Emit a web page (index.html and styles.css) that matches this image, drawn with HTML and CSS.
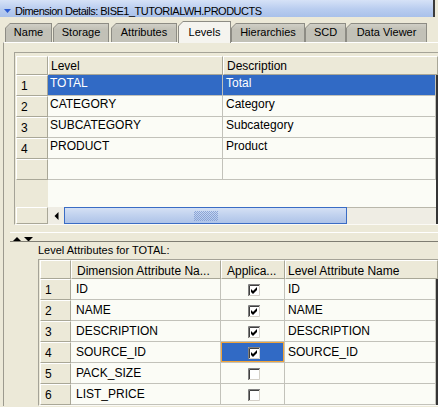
FILE: index.html
```html
<!DOCTYPE html>
<html>
  <head>
    <meta charset="utf-8" />
    <title>Dimension Details</title>
    <link rel="stylesheet" href="styles.css">
  </head>
  <body>
    <svg class="defs" width="0" height="0">
      <symbol id="box-off" viewBox="0 0 12 12">
        <rect x="0" y="0" width="12" height="12" fill="#fff"/>
        <path d="M0.5 12V0.5H12" stroke="#808080" fill="none"/>
        <path d="M1.5 11V1.5H11" stroke="#404040" fill="none"/>
        <path d="M1 11.5H11.5V1" stroke="#d4d0c8" fill="none"/>
      </symbol>
      <symbol id="box-on" viewBox="0 0 12 12">
        <use href="#box-off"/>
        <path d="M3 5L5 7L9 3V6L5 10L3 8Z" fill="#000"/>
      </symbol>
    </svg>

    <div class="titlebar">
      <svg class="collapse" width="7" height="4" viewBox="0 0 7 4"><path d="M0 0H7L3.5 4Z" fill="#2b5bd2"/></svg>
      <span>Dimension Details: BISE1_TUTORIALWH.PRODUCTS</span>
    </div>

    <div class="tabs">
      <div class="tab tab-name"><span>Name</span></div>
      <div class="tab tab-storage"><span>Storage</span></div>
      <div class="tab tab-attributes"><span>Attributes</span></div>
      <div class="tab tab-levels active"><span>Levels</span></div>
      <div class="tab tab-hierarchies"><span>Hierarchies</span></div>
      <div class="tab tab-scd"><span>SCD</span></div>
      <div class="tab tab-viewer"><span>Data Viewer</span></div>
    </div>

    <div class="panel">
      <!-- levels table -->
      <div class="grid grid-levels">
        <div class="grid-head">
          <div class="head-cell rownum-head"></div>
          <div class="head-cell c-level">Level</div>
          <div class="head-cell c-desc">Description</div>
        </div>
        <div class="grid-body">
          <div class="row selected">
            <div class="rownum">1</div>
            <div class="cell c-level">TOTAL</div>
            <div class="cell c-desc">Total</div>
          </div>
          <div class="row">
            <div class="rownum">2</div>
            <div class="cell c-level">CATEGORY</div>
            <div class="cell c-desc">Category</div>
          </div>
          <div class="row">
            <div class="rownum">3</div>
            <div class="cell c-level">SUBCATEGORY</div>
            <div class="cell c-desc">Subcategory</div>
          </div>
          <div class="row">
            <div class="rownum">4</div>
            <div class="cell c-level">PRODUCT</div>
            <div class="cell c-desc">Product</div>
          </div>
          <div class="row">
            <div class="rownum"></div>
            <div class="cell c-level"></div>
            <div class="cell c-desc"></div>
          </div>
          <div class="filler">
            <div class="gutter"></div>
            <div class="blank"></div>
          </div>
          <div class="hscroll">
            <div class="rownum"></div>
            <div class="arrow-btn">
              <svg width="5" height="8" viewBox="0 0 5 8"><path d="M4.5 0V8L0.5 4Z" fill="#000"/></svg>
            </div>
            <div class="thumb"><div class="grip"></div></div>
            <div class="track"></div>
          </div>
        </div>
      </div>

      <div class="splitter">
        <svg width="21" height="4" viewBox="0 0 21 4">
          <path d="M0 4L4 0L8 4Z" fill="#000"/>
          <path d="M11 0H20L15.5 4.5Z" fill="#000"/>
        </svg>
      </div>

      <div class="section-label">Level Attributes for TOTAL:</div>

      <!-- level attributes table -->
      <div class="grid grid-attrs">
        <div class="grid-head">
          <div class="head-cell rownum-head"></div>
          <div class="head-cell c-dim">Dimension Attribute Na...</div>
          <div class="head-cell c-app">Applica...</div>
          <div class="head-cell c-lan">Level Attribute Name</div>
        </div>
        <div class="grid-body">
          <div class="row">
            <div class="rownum">1</div>
            <div class="cell c-dim">ID</div>
            <div class="cell c-app"><svg class="box"><use href="#box-on"/></svg></div>
            <div class="cell c-lan">ID</div>
          </div>
          <div class="row">
            <div class="rownum">2</div>
            <div class="cell c-dim">NAME</div>
            <div class="cell c-app"><svg class="box"><use href="#box-on"/></svg></div>
            <div class="cell c-lan">NAME</div>
          </div>
          <div class="row">
            <div class="rownum">3</div>
            <div class="cell c-dim">DESCRIPTION</div>
            <div class="cell c-app"><svg class="box"><use href="#box-on"/></svg></div>
            <div class="cell c-lan">DESCRIPTION</div>
          </div>
          <div class="row">
            <div class="rownum">4</div>
            <div class="cell c-dim">SOURCE_ID</div>
            <div class="cell c-app focused"><svg class="box"><use href="#box-on"/></svg></div>
            <div class="cell c-lan">SOURCE_ID</div>
          </div>
          <div class="row">
            <div class="rownum">5</div>
            <div class="cell c-dim">PACK_SIZE</div>
            <div class="cell c-app"><svg class="box"><use href="#box-off"/></svg></div>
            <div class="cell c-lan"></div>
          </div>
          <div class="row">
            <div class="rownum">6</div>
            <div class="cell c-dim">LIST_PRICE</div>
            <div class="cell c-app"><svg class="box"><use href="#box-off"/></svg></div>
            <div class="cell c-lan"></div>
          </div>
        </div>
      </div>
    </div>
  </body>
</html>
```

FILE: styles.css
```css
body {
    margin: 0;
    width: 438px;
    height: 407px;
    overflow: hidden;
    background: #ece9d8;
    font-family: "Liberation Sans", Arial, sans-serif;
    color: #000;
}
.defs {
    position: absolute;
}

/* title bar */
.titlebar {
    display: flex;
    align-items: flex-start;
    width: 435px;
    height: 17px;
    box-sizing: border-box;
    padding: 4px 0 0 4px;
    background: linear-gradient(#d6e2f7, #b8ccef 55%, #a9c1ea);
    border-right: 2px solid #3b3b3b;
    font-size: 11px;
    line-height: 14px;
    letter-spacing: -0.5px;
    white-space: nowrap;
}
.collapse {
    flex: none;
    margin: 5px 4px 0 0;
}

/* tabs */
.tabs {
    display: flex;
    align-items: flex-end;
    height: 25px;
    padding-left: 5px;
}
.tab {
    flex: none;
    height: 19px;
    box-sizing: border-box;
    padding: 1px 1px 0 1px;
    background: #8d8c84;
    clip-path: polygon(5px 0, 100% 0, 100% 100%, 0 100%, 0 5px);
    font-size: 11px;
}
.tab span {
    display: block;
    height: 100%;
    box-sizing: border-box;
    background: linear-gradient(#d0cfc6, #c2c1b7 30%);
    clip-path: polygon(4px 0, 100% 0, 100% 100%, 0 100%, 0 4px);
    text-align: center;
    line-height: 16px;
    white-space: nowrap;
}
.tab.active {
    position: relative;
    z-index: 1;
    height: 22px;
    margin-bottom: -1px;
}
.tab.active span {
    padding-top: 2px;
    background: #f5f4ef;
}
.tab-name { width: 47px; }
.tab-storage { width: 56px; margin-left: 1px; }
.tab-attributes { width: 66px; margin-left: 2px; }
.tab-levels { width: 53px; margin-left: 1px; }
.tab-hierarchies { width: 74px; }
.tab-scd { width: 41px; }
.tab-viewer { width: 81px; }

/* tab page */
.panel {
    margin-left: 3px;
    border-left: 1px solid #9c9a8e;
    border-top: 1px solid #fff;
    padding-top: 9px;
}

/* tables */
.grid {
    border: 1px solid;
    border-color: #a5a397 transparent #fbfaf5 #a5a397;
    border-right: 0;
    padding-left: 1px;
}
.grid-levels {
    margin-left: 10px;
    padding-top: 3px;
}
.grid-attrs {
    margin: 1px 0 0 34px;
}
.grid-head,
.row,
.filler,
.hscroll {
    display: flex;
}
.grid-body {
    border-right: 2px solid #353535;
}
.head-cell,
.rownum {
    flex: none;
    box-sizing: border-box;
    border: 1px solid;
    border-color: #fff #a9a797 #a9a797 #fff;
    background: #ece9d8;
    font-size: 12px;
    line-height: 16px;
    white-space: nowrap;
    overflow: hidden;
}
.head-cell {
    height: 19px;
    padding: 1px 0 0 3px;
}
.grid-attrs .head-cell {
    padding-top: 2px;
}
.rownum-head,
.rownum {
    width: 32px;
}
.grid-attrs .rownum-head,
.grid-attrs .rownum {
    width: 31px;
}
.rownum {
    height: 21px;
    padding: 2px 0 0 4px;
}
.row {
    height: 21px;
}
.cell {
    flex: none;
    box-sizing: border-box;
    height: 21px;
    border-right: 1px solid #c2c2ba;
    border-bottom: 1px solid #c2c2ba;
    background: #fbfcf6;
    font-size: 12px;
    line-height: 16px;
    white-space: nowrap;
    overflow: hidden;
}
.row.selected .cell {
    background: #316ac5;
    color: #fff;
}

.c-level { width: 175px; padding-left: 2px; }
.c-desc { flex: 1; padding-left: 3px; }
.c-dim { width: 150px; padding-left: 5px; }
.c-app { width: 64px; padding-left: 5px; }
.c-lan { flex: 1; padding-left: 2px; }

.cell.c-dim,
.cell.c-lan {
    padding-top: 2px;
}
.cell.c-lan {
    padding-left: 3px;
}
.cell.c-app {
    display: flex;
    justify-content: center;
    padding: 5px 0 0 3px;
}
.cell.focused {
    background: #316ac5;
    box-shadow: inset 0 0 0 1px #f2a53a;
}
.box {
    width: 12px;
    height: 12px;
}

/* empty area and horizontal scrollbar */
.filler {
    height: 27px;
}
.gutter {
    width: 32px;
    background: #ece9d8;
}
.blank {
    flex: 1;
    background: #fbfcf6;
}
.hscroll {
    height: 17px;
}
.hscroll .rownum {
    height: 17px;
}
.arrow-btn {
    flex: none;
    display: flex;
    align-items: center;
    justify-content: center;
    width: 16px;
    background: #efede4;
}
.thumb {
    flex: none;
    display: flex;
    align-items: center;
    justify-content: center;
    width: 283px;
    box-sizing: border-box;
    border: 1px solid #3a6cc4;
    background: linear-gradient(#d4e0f4, #c0d1ee 50%, #aec3e8);
}
.grip {
    width: 24px;
    height: 10px;
    background: repeating-conic-gradient(#8aa4d6 0 25%, transparent 0 50%) 0 0 / 2px 2px;
}
.track {
    flex: 1;
    border-top: 1px solid #b9b7ab;
    background: #efede4;
}

/* divider */
.splitter {
    height: 8px;
    margin: 7px 0 0 6px;
    padding-left: 3px;
    border-top: 1px solid #fff;
    border-bottom: 1px solid #7f7d72;
}
.splitter svg {
    display: block;
    margin-top: 4px;
}
.section-label {
    height: 16px;
    margin-left: 34px;
    font-size: 11px;
    line-height: 16px;
}
```
